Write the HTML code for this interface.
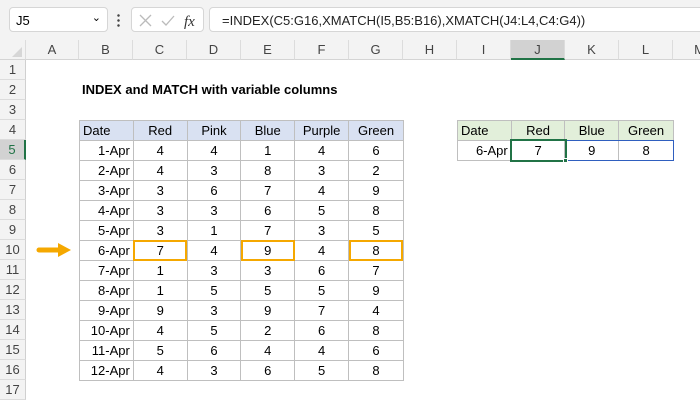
<!DOCTYPE html>
<html><head><meta charset="utf-8"><style>
*{margin:0;padding:0;box-sizing:border-box}
body{width:700px;height:400px;overflow:hidden;background:#fff;font-family:"Liberation Sans",Arial,sans-serif;position:relative;color:#000}
.top{position:absolute;left:0;top:0;width:700px;height:40px;background:#f3f3f3}
.nb{position:absolute;left:9px;top:7px;width:99px;height:25px;background:#fff;border:1px solid #d6d6d6;border-radius:4px;font-size:13px;padding:5px 0 0 6px}
.fxb{position:absolute;left:131px;top:7px;width:73px;height:25px;background:#fff;border:1px solid #d6d6d6;border-radius:4px}
.fb{position:absolute;left:209px;top:7px;width:500px;height:25px;background:#fff;border:1px solid #d6d6d6;border-radius:4px;font-size:13px;padding:5px 0 0 12px;color:#222}
.ch{position:absolute;top:40px;height:20px;background:#f3f3f3;border-bottom:1px solid #d4d4d4;border-right:1px solid #dcdcdc;font-size:13px;color:#444;text-align:center;line-height:19px}
.rh{position:absolute;left:0;width:26px;height:20px;background:#f3f3f3;border-bottom:1px solid #dcdcdc;border-right:1px solid #d0d0d0;font-size:13px;color:#444;text-align:center;line-height:20px}
table{position:absolute;border-collapse:collapse;font-size:13px;background:#fff}
td{border:1px solid #bfbfbf;height:20px;padding:0 3px;text-align:center;line-height:18px}
td.d{text-align:right}
td.l{text-align:left}
.h1 td{background:#d9e1f2}
.h2 td{background:#e2efda}
.ob{position:absolute;top:240px;width:54px;height:21px;border:2.5px solid #f5a800}
</style></head><body>
<div class="top"></div>
<div class="nb">J5<span style="position:absolute;right:6px;top:3px;font-size:11px">&#8964;</span></div>
<div style="position:absolute;left:117px;top:13px;width:3px;height:14px;background:radial-gradient(circle,#444 1px,transparent 1.5px) 0 0/3px 5px"></div>
<div class="fxb">
<svg width="73" height="25" style="position:absolute;left:0;top:0"><path d="M8 7l11 11M19 7L8 18" stroke="#bbb" stroke-width="1.3" fill="none"/><path d="M30 13l4 4 8-9" stroke="#bbb" stroke-width="1.3" fill="none"/><text x="52" y="18" font-family="Liberation Serif" font-style="italic" font-size="15" fill="#333">fx</text></svg>
</div>
<div class="fb">=INDEX(C5:G16,XMATCH(I5,B5:B16),XMATCH(J4:L4,C4:G4))</div>

<div class="ch" style="left:0;width:26px"><svg width="26" height="20"><path d="M22 17L22 7 12 17z" fill="#d6d6d6"/></svg></div>
<div class="ch" style="left:26px;width:53px">A</div>
<div class="ch" style="left:79px;width:54px">B</div>
<div class="ch" style="left:133px;width:54px">C</div>
<div class="ch" style="left:187px;width:54px">D</div>
<div class="ch" style="left:241px;width:54px">E</div>
<div class="ch" style="left:295px;width:54px">F</div>
<div class="ch" style="left:349px;width:54px">G</div>
<div class="ch" style="left:403px;width:54px">H</div>
<div class="ch" style="left:457px;width:54px">I</div>
<div class="ch" style="left:511px;width:54px;background:#d2d2d2;border-bottom:2px solid #217346">J</div>
<div class="ch" style="left:565px;width:54px">K</div>
<div class="ch" style="left:619px;width:54px">L</div>
<div class="ch" style="left:673px;width:54px">M</div>

<div class="rh" style="top:60px">1</div><div class="rh" style="top:80px">2</div><div class="rh" style="top:100px">3</div><div class="rh" style="top:120px">4</div><div class="rh" style="top:140px;background:#d2d2d2;color:#217346;border-right:2px solid #217346">5</div><div class="rh" style="top:160px">6</div><div class="rh" style="top:180px">7</div><div class="rh" style="top:200px">8</div><div class="rh" style="top:220px">9</div><div class="rh" style="top:240px">10</div><div class="rh" style="top:260px">11</div><div class="rh" style="top:280px">12</div><div class="rh" style="top:300px">13</div><div class="rh" style="top:320px">14</div><div class="rh" style="top:340px">15</div><div class="rh" style="top:360px">16</div><div class="rh" style="top:380px">17</div>

<div style="position:absolute;left:82px;top:82px;font-size:13px;font-weight:bold">INDEX and MATCH with variable columns</div>

<table style="left:79px;top:120px;width:325px">
<colgroup><col style="width:54px"><col style="width:54px"><col style="width:54px"><col style="width:54px"><col style="width:54px"><col style="width:55px"></colgroup>
<tr class="h1"><td class="l">Date</td><td>Red</td><td>Pink</td><td>Blue</td><td>Purple</td><td>Green</td></tr>
<tr><td class="d">1-Apr</td><td>4</td><td>4</td><td>1</td><td>4</td><td>6</td></tr>
<tr><td class="d">2-Apr</td><td>4</td><td>3</td><td>8</td><td>3</td><td>2</td></tr>
<tr><td class="d">3-Apr</td><td>3</td><td>6</td><td>7</td><td>4</td><td>9</td></tr>
<tr><td class="d">4-Apr</td><td>3</td><td>3</td><td>6</td><td>5</td><td>8</td></tr>
<tr><td class="d">5-Apr</td><td>3</td><td>1</td><td>7</td><td>3</td><td>5</td></tr>
<tr><td class="d">6-Apr</td><td>7</td><td>4</td><td>9</td><td>4</td><td>8</td></tr>
<tr><td class="d">7-Apr</td><td>1</td><td>3</td><td>3</td><td>6</td><td>7</td></tr>
<tr><td class="d">8-Apr</td><td>1</td><td>5</td><td>5</td><td>5</td><td>9</td></tr>
<tr><td class="d">9-Apr</td><td>9</td><td>3</td><td>9</td><td>7</td><td>4</td></tr>
<tr><td class="d">10-Apr</td><td>4</td><td>5</td><td>2</td><td>6</td><td>8</td></tr>
<tr><td class="d">11-Apr</td><td>5</td><td>6</td><td>4</td><td>4</td><td>6</td></tr>
<tr><td class="d">12-Apr</td><td>4</td><td>3</td><td>6</td><td>5</td><td>8</td></tr>
</table>
<div class="ob" style="left:133px"></div>
<div class="ob" style="left:241px"></div>
<div class="ob" style="left:349px"></div>
<svg style="position:absolute;left:36px;top:241px" width="40" height="18"><path d="M3 9H24" stroke="#f5a800" stroke-width="5" stroke-linecap="round"/><path d="M22 2L35 9 22 16z" fill="#f5a800"/></svg>

<table style="left:457px;top:120px;width:217px">
<colgroup><col style="width:54px"><col style="width:54px"><col style="width:54px"><col style="width:55px"></colgroup>
<tr class="h2"><td class="l">Date</td><td>Red</td><td>Blue</td><td>Green</td></tr>
<tr><td class="d">6-Apr</td><td>7</td><td>9</td><td>8</td></tr>
</table>
<div style="position:absolute;left:511px;top:140px;width:163px;height:21px;border:1px solid #2f5fbf;border-left:none"></div>
<div style="position:absolute;left:510px;top:139px;width:57px;height:23px;border:2px solid #217346"></div>
<div style="position:absolute;left:563px;top:158px;width:5px;height:5px;background:#217346;border:1px solid #fff"></div>
</body></html>
